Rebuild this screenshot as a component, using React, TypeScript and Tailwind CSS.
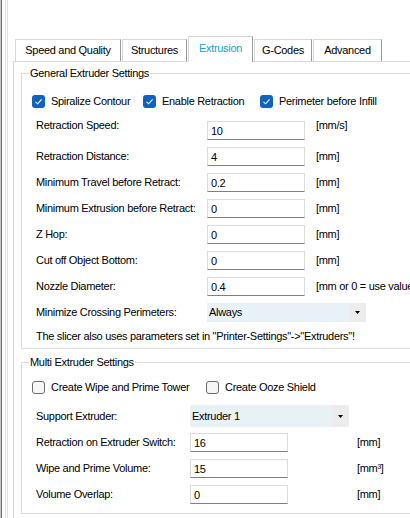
import React from 'react';

const FONT = "font-['Liberation_Sans',Arial,sans-serif] text-[11px] tracking-[-0.3px] text-black";

const tabs = [
  { label: 'Speed and Quality', w: 'w-[106px]', ml: 'ml-[2px]' },
  { label: 'Structures', w: 'w-[65px]', ml: 'ml-px' },
  { label: 'Extrusion', w: 'w-[65px]', ml: 'ml-px', active: true },
  { label: 'G-Codes', w: 'w-[58px]', ml: 'ml-px' },
  { label: 'Advanced', w: 'w-[69px]', ml: 'ml-px' },
];

const CheckBox: React.FC<{ checked?: boolean; label: string; w?: string }> = ({ checked, label, w }) => (
  <div className={`flex items-center shrink-0 ${w ?? ''}`}>
    {checked ? (
      <span className="w-[13px] h-[13px] rounded-[3px] bg-[#0f62c0] flex items-center justify-center">
        <svg width="9" height="9" viewBox="0 0 9 9">
          <path d="M1.5 4.8 L3.6 6.8 L7.6 2.3" fill="none" stroke="white" strokeWidth="1.1" />
        </svg>
      </span>
    ) : (
      <span className="w-[13px] h-[13px] rounded-[3px] border border-[#6b6b6b] bg-[#f6f6f6]" />
    )}
    <span className="ml-[6px] whitespace-nowrap">{label}</span>
  </div>
);

const TextBox: React.FC<{ value: string }> = ({ value }) => (
  <input
    readOnly
    value={value}
    className="w-[98px] h-[19px] shrink-0 bg-white border border-[#dcdcdc] border-b-[#808080] pl-[3px] pt-[2px] outline-none"
  />
);

const Combo: React.FC<{ value: string; h: string }> = ({ value, h }) => (
  <div className={`flex shrink-0 ${h}`}>
    <div className="w-[142px] bg-[#e8f2f6] flex items-center pl-[2px]">{value}</div>
    <div className="w-[17px] bg-[#ececec] flex items-center justify-center">
      <svg width="5" height="3" viewBox="0 0 5 3">
        <polygon points="0,0 5,0 2.5,3" fill="#000" />
      </svg>
    </div>
  </div>
);

type Row = { label: string; value: string; unit: string; raised?: boolean };

const general: Row[] = [
  { label: 'Retraction Speed:', value: '10', unit: '[mm/s]', raised: true },
  { label: 'Retraction Distance:', value: '4', unit: '[mm]' },
  { label: 'Minimum Travel before Retract:', value: '0.2', unit: '[mm]' },
  { label: 'Minimum Extrusion before Retract:', value: '0', unit: '[mm]' },
  { label: 'Z Hop:', value: '0', unit: '[mm]' },
  { label: 'Cut off Object Bottom:', value: '0', unit: '[mm]' },
  { label: 'Nozzle Diameter:', value: '0.4', unit: '[mm or 0 = use value from printer settings]' },
];

const multi: Row[] = [
  { label: 'Retraction on Extruder Switch:', value: '16', unit: '[mm]' },
  { label: 'Wipe and Prime Volume:', value: '15', unit: '[mm³]' },
  { label: 'Volume Overlap:', value: '0', unit: '[mm]' },
];

export default function App() {
  return (
    <div className={`w-[410px] h-[518px] overflow-hidden bg-white flex ${FONT}`}>
      {/* window edge on the left */}
      <div className="flex shrink-0 w-[13px]">
        <div className="w-px bg-[#c4c4c4]" />
        <div className="w-px bg-[#6e6e6e]" />
        <div className="w-[3px]" />
        <div className="w-px bg-[#e3e3e3]" />
        <div className="w-px" />
        <div className="w-px bg-[#e3e3e3]" />
      </div>

      <div className="flex flex-col w-[440px] shrink-0 pt-[36px]">
        {/* tabs */}
        <div className="flex items-end h-[25px]">
          {tabs.map(t =>
            t.active ? (
              <div
                key={t.label}
                className={`${t.w} ${t.ml} h-[26px] -mb-px relative z-10 bg-white border-t border-l border-[#d9d9d9] border-r border-r-[#9a9a9a] flex items-center justify-center pb-[3px] text-[#18a0d2]`}
              >
                {t.label}
              </div>
            ) : (
              <div
                key={t.label}
                className={`${t.w} ${t.ml} h-[22px] bg-white border-t border-l border-[#d9d9d9] border-r border-r-[#9a9a9a] flex items-center justify-center`}
              >
                {t.label}
              </div>
            )
          )}
        </div>

        {/* tab page */}
        <div className="flex-1 border-t border-l border-[#d9d9d9] pl-[7px] pt-[5px]">
          <fieldset className="border border-[#dcdcdc] w-[420px]">
            <legend className="ml-[7px] px-px leading-[13px]">General Extruder Settings</legend>
            <div className="flex items-center h-[26px] mt-[8px] pl-[10px]">
              <CheckBox checked label="Spiralize Contour" w="w-[111px]" />
              <CheckBox checked label="Enable Retraction" w="w-[117px]" />
              <CheckBox checked label="Perimeter before Infill" />
            </div>
            <div className="mt-[3px] pl-[14px]">
              {general.map(r => (
                <div key={r.label} className="flex items-center h-[26px]">
                  <span className={`w-[171px] shrink-0 whitespace-nowrap ${r.raised ? 'mb-[9px]' : ''}`}>{r.label}</span>
                  <TextBox value={r.value} />
                  <span className={`ml-[11px] whitespace-nowrap ${r.raised ? 'mb-[9px]' : ''}`}>{r.unit}</span>
                </div>
              ))}
              <div className="flex items-center h-[26px]">
                <span className="w-[171px] shrink-0 whitespace-nowrap">Minimize Crossing Perimeters:</span>
                <Combo value="Always" h="h-[19px]" />
              </div>
              <div className="flex items-center h-[23px] whitespace-nowrap">
                The slicer also uses parameters set in "Printer-Settings"-&gt;"Extruders"!
              </div>
            </div>
          </fieldset>

          <fieldset className="border border-[#dcdcdc] w-[420px] mt-[7px] pb-[6px]">
            <legend className="ml-[7px] px-px leading-[13px]">Multi Extruder Settings</legend>
            <div className="flex items-center h-[26px] mt-[5px] pl-[10px]">
              <CheckBox label="Create Wipe and Prime Tower" w="w-[174px]" />
              <CheckBox label="Create Ooze Shield" />
            </div>
            <div className="mt-[3px] pl-[14px]">
              <div className="flex items-center h-[26px]">
                <span className="w-[154px] shrink-0 whitespace-nowrap">Support Extruder:</span>
                <Combo value="Extruder 1" h="h-[22px]" />
              </div>
              {multi.map(r => (
                <div key={r.label} className="flex items-center h-[26px]">
                  <span className="w-[154px] shrink-0 whitespace-nowrap">{r.label}</span>
                  <TextBox value={r.value} />
                  <span className="ml-[69px] whitespace-nowrap">{r.unit}</span>
                </div>
              ))}
            </div>
          </fieldset>
        </div>
      </div>
    </div>
  );
}
